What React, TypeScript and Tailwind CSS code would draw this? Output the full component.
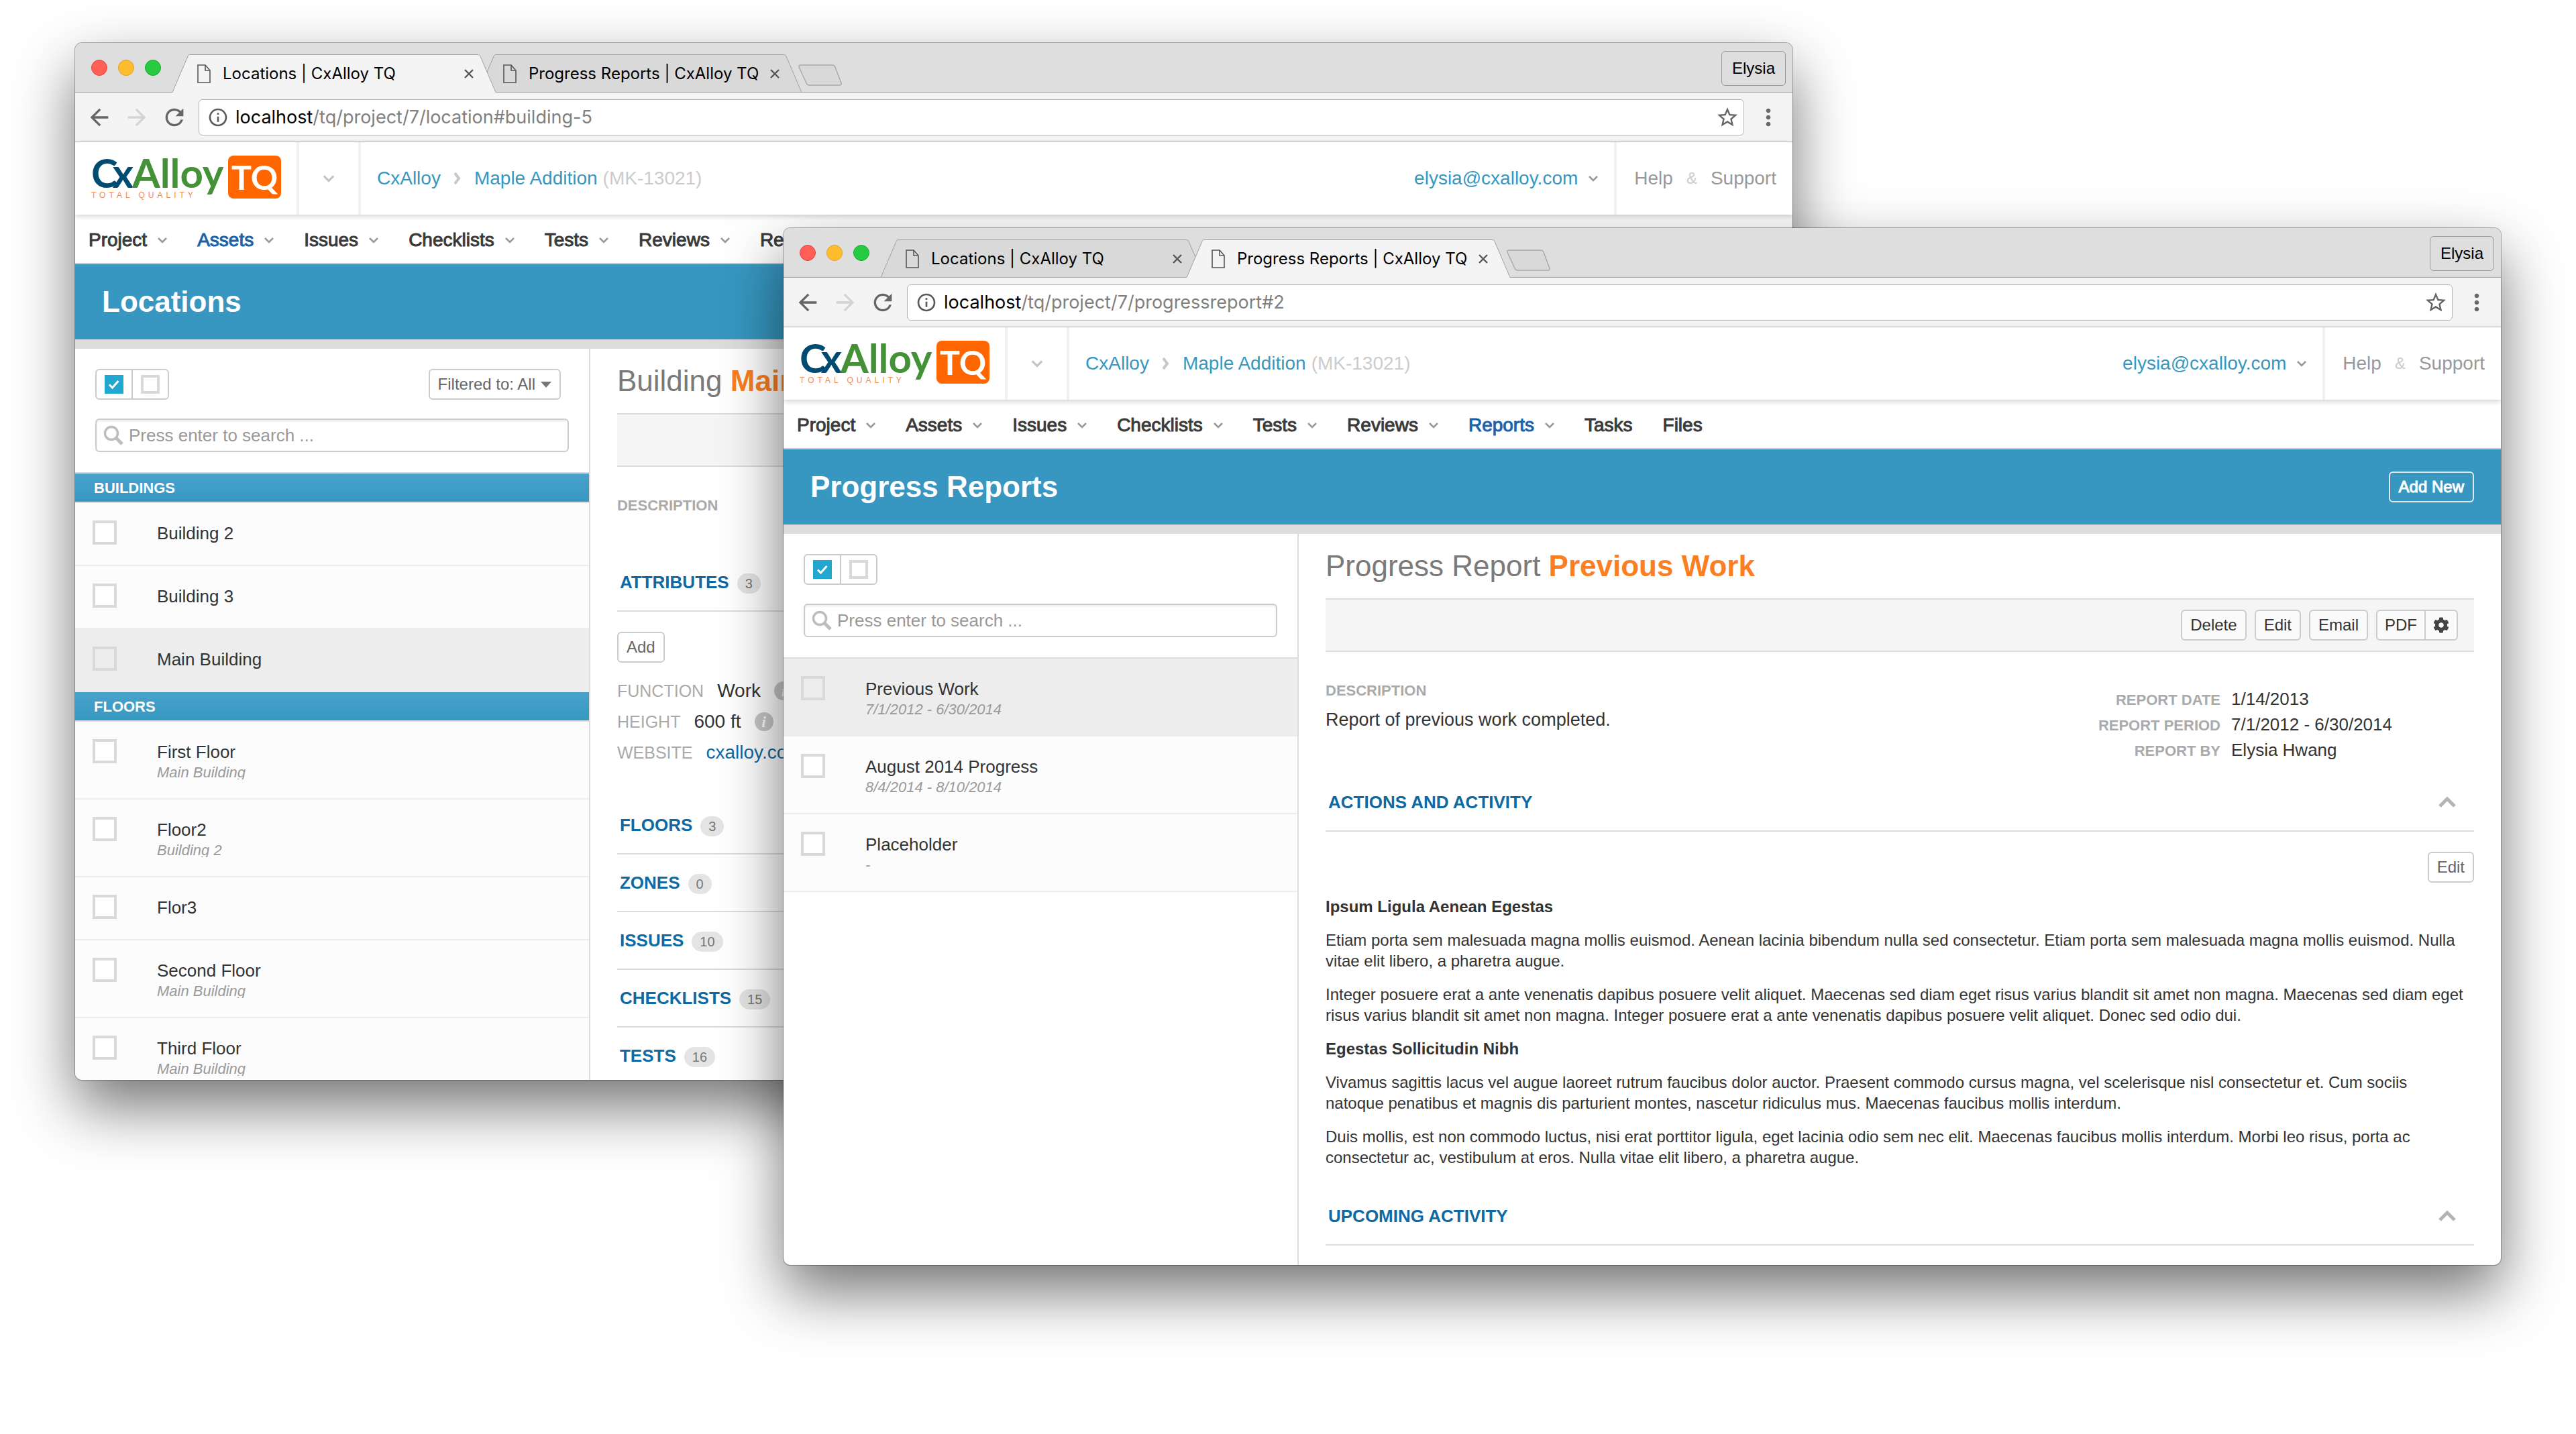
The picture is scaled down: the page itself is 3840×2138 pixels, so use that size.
import { useId, type ReactNode } from "react";
import { FaCog } from "react-icons/fa";
import {
  MdArrowBack,
  MdArrowForward,
  MdInfoOutline,
  MdMoreVert,
  MdRefresh,
  MdStarBorder,
} from "react-icons/md";

function ChevronDown({ className }: { className: string }) {
  return (
    <svg viewBox="0 0 14 10" fill="none" stroke="currentColor" strokeWidth="2.6" className={className} aria-hidden="true">
      <path d="M1 2l6 6 6-6" />
    </svg>
  );
}

function ChevronUp() {
  return (
    <svg viewBox="0 0 26 18" fill="none" stroke="currentColor" strokeWidth="5" className="h-[18px] w-[26px] text-[#b4b4b4]" aria-hidden="true">
      <path d="M2 15L13 4l11 11" />
    </svg>
  );
}

function PageIcon() {
  return (
    <svg viewBox="0 0 20 28" fill="none" stroke="#555" strokeWidth="1.6" className="h-7 w-5 shrink-0" aria-hidden="true">
      <path d="M1 1h11l7 8v18H1z" />
      <path d="M12 1v8h7" />
    </svg>
  );
}

function Tab({ title, active }: { title: string; active: boolean }) {
  return (
    <div className={active ? "relative z-10 -mr-7 h-[57px] w-[484px] shrink-0" : "relative -mr-7 h-[57px] w-[484px] shrink-0"}>
      <svg viewBox="0 0 484 57" className="absolute inset-0 h-full w-full" aria-hidden="true">
        <path
          d="M0 56.5C2 56 2 55 3 52L24 3C25 1 25 .5 28 .5H456C459 .5 459 1 460 3L481 52C482 55 482 56 484 56.5"
          fill={active ? "#f4f4f4" : "#d9d9d9"}
          stroke="#a0a0a0"
        />
        {active ? <path d="M2 56.5H482" stroke="#f4f4f4" strokeWidth="2" /> : <path d="M0 56.5H484" stroke="#a0a0a0" />}
      </svg>
      <div className="relative flex h-full items-center pr-[34px] pl-[38px]">
        <PageIcon />
        <button type="button" className="ml-[18px] flex-1 text-left font-['Inter',sans-serif] text-2xl leading-7 whitespace-nowrap text-black">
          {title}
        </button>
        <button type="button" aria-label={`Close ${title}`} className="text-[#555]">
          <svg viewBox="0 0 14 14" fill="none" stroke="currentColor" strokeWidth="2.4" className="size-[14px]">
            <path d="M1 1l12 12M13 1L1 13" />
          </svg>
        </button>
      </div>
    </div>
  );
}

function Logo() {
  return (
    <a href="#home" className="flex h-16 items-stretch gap-2 font-['Lato',sans-serif] font-bold" aria-label="CxAlloy TQ Total Quality">
      <span className="relative block w-[196px]">
        <span className="flex text-[60px] leading-[50px] whitespace-nowrap text-[#459138]">
          <span className="text-[#004b71]">C</span>
          <span className="-ml-2 text-[#004b71]">x</span>
          <span className="-ml-0.5">Alloy</span>
        </span>
        <span className="absolute bottom-0 left-0 font-['Liberation_Sans',sans-serif] text-[12px] leading-[10px] font-normal tracking-[5px] whitespace-nowrap text-[#f58b4c]">
          TOTAL QUALITY
        </span>
      </span>
      <span className="flex w-[79px] items-center justify-center rounded-lg bg-[#ff6600] text-[50px] leading-none text-white">TQ</span>
    </a>
  );
}

const navItems = ["Project", "Assets", "Issues", "Checklists", "Tests", "Reviews", "Reports", "Tasks", "Files"];
const plainItems = ["Tasks", "Files"];

type WindowProps = {
  className: string;
  activeTab: number;
  path: string;
  activeNav: string;
  title: string;
  action?: ReactNode;
  sidebar: ReactNode;
  children: ReactNode;
};

function BrowserWindow({ className, activeTab, path, activeNav, title, action, sidebar, children }: WindowProps) {
  return (
    <section
      className={`absolute flex w-2/3 flex-col overflow-hidden rounded-[10px] bg-white shadow-[0_0_0_1px_rgba(0,0,0,0.3),0_40px_90px_rgba(0,0,0,0.55)] ${className}`}
    >
      <div className="flex h-[74px] shrink-0 items-end border-b border-[#a0a0a0] bg-[#dedede]">
        <div className="flex gap-4 self-center pl-6">
          <button type="button" aria-label="Close window" className="size-6 rounded-full border border-[#e2463f] bg-[#ff5f57]" />
          <button type="button" aria-label="Minimize window" className="size-6 rounded-full border border-[#e0a028] bg-[#ffbd2e]" />
          <button type="button" aria-label="Zoom window" className="size-6 rounded-full border border-[#1aab29] bg-[#28ca42]" />
        </div>
        <div className="-mb-px ml-4 flex items-end">
          <Tab title="Locations | CxAlloy TQ" active={activeTab === 0} />
          <Tab title="Progress Reports | CxAlloy TQ" active={activeTab === 1} />
        </div>
        <button type="button" aria-label="New tab" className="mb-[9px] ml-[22px]">
          <svg viewBox="0 0 66 32" fill="#d9d9d9" stroke="#a8a8a8" strokeWidth="1.4" className="h-8 w-[66px]">
            <path d="M4 1h46q4 0 5 3l9 24q1 3-3 3H17q-4 0-5-3L1 4q-1-3 3-3z" />
          </svg>
        </button>
        <button type="button" className="mr-2.5 mb-[9px] ml-auto h-[52px] rounded-md border border-[#999] px-[15px] text-2xl leading-none text-black">
          Elysia
        </button>
      </div>

      <div className="flex h-[74px] shrink-0 items-center gap-4 border-b border-[#c0c0c0] bg-[#f4f4f4] px-4 text-[#666]">
        <button type="button" aria-label="Back"><MdArrowBack className="size-10" /></button>
        <button type="button" aria-label="Forward" className="text-[#d4d4d4]"><MdArrowForward className="size-10" /></button>
        <button type="button" aria-label="Reload"><MdRefresh className="size-10" /></button>
        <div className="flex h-[54px] flex-1 items-center rounded-md border border-[#b4b4b4] bg-white pr-1.5 pl-3">
          <MdInfoOutline className="size-8 text-[#5a5a5a]" />
          <span className="ml-2.5 flex-1 font-['Inter',sans-serif] text-[27px] leading-8 text-[#808080]">
            <span className="text-black">localhost</span>
            {path}
          </span>
          <button type="button" aria-label="Bookmark this page"><MdStarBorder className="size-9" /></button>
        </div>
        <button type="button" aria-label="Browser menu"><MdMoreVert className="size-10" /></button>
      </div>

      <header className="relative z-10 flex h-[108px] shrink-0 bg-white text-[28px] leading-8 shadow-[0_2px_8px_rgba(0,0,0,0.2)]">
        <div className="flex w-[334px] items-center border-r-4 border-[#f0f0f0] pb-1 pl-6"><Logo /></div>
        <button type="button" aria-label="Switch project" className="flex w-[92px] items-center justify-center border-r-4 border-[#f0f0f0] text-[#c4c4c4]">
          <ChevronDown className="h-3 w-[18px]" />
        </button>
        <nav aria-label="Breadcrumb" className="flex items-center pl-6 text-[#3797c1]">
          <a href="#account">CxAlloy</a>
          <svg viewBox="0 0 10 18" fill="none" stroke="#c8c8c8" strokeWidth="4" className="mx-5 h-[18px] w-2.5" aria-hidden="true">
            <path d="M1 1l6 8-6 8" />
          </svg>
          <a href="#project">Maple Addition</a>
          <span className="ml-2 text-[#ccc]">(MK-13021)</span>
        </nav>
        <button type="button" className="ml-auto flex items-center gap-4 border-r-4 border-[#f0f0f0] pr-6 text-[#3797c1]">
          elysia@cxalloy.com
          <ChevronDown className="h-2.5 w-3.5 text-[#999]" />
        </button>
        <div className="flex items-center gap-5 pr-6 pl-[26px] text-[#999]">
          <a href="#help">Help</a>
          <span className="text-2xl text-[#ccc]">&amp;</span>
          <a href="#support">Support</a>
        </div>
      </header>

      <nav aria-label="Main" className="flex h-[74px] shrink-0 items-center gap-[45px] border-b-2 border-[#c8c8c8] bg-white pt-1 pl-5 text-[28px] leading-8 text-[#3a3a3a]">
        {navItems.map((item) => (
          <a
            key={item}
            href={`#${item.toLowerCase()}`}
            className={
              item === activeNav
                ? "flex items-center gap-4 text-[#1b62a8] [-webkit-text-stroke:1px]"
                : "flex items-center gap-4 [-webkit-text-stroke:1px]"
            }
          >
            {item}
            {!plainItems.includes(item) && <ChevronDown className="h-2.5 w-3.5 text-[#999]" />}
          </a>
        ))}
      </nav>

      <div className="flex h-[126px] shrink-0 items-center justify-between border-b-[14px] border-[#ddd] bg-[#3797c1] px-10">
        <h1 className="text-[44px] leading-[56px] font-bold text-white">{title}</h1>
        {action}
      </div>

      <div className="flex min-h-0 flex-1">
        <aside className="w-[30%] shrink-0 border-r-2 border-[#ddd]">{sidebar}</aside>
        <main className="min-w-0 flex-1 px-10 text-[#333]">{children}</main>
      </div>
    </section>
  );
}

function SidebarTools({ filter }: { filter?: string }) {
  const id = useId();
  return (
    <div className="border-b-2 border-[#ddd] p-[30px]">
      <div className="flex justify-between">
        <div className="flex h-[46px] rounded-md border-2 border-[#ccc]">
          <button type="button" aria-label="Select all" className="flex w-[54px] items-center justify-center border-r-2 border-[#ccc]">
            <svg viewBox="0 0 28 28" className="size-7">
              <rect width="28" height="28" fill="#22a7d0" />
              <path d="M7 14.5l4.5 4.5 9-10" fill="none" stroke="#fff" strokeWidth="3" />
            </svg>
          </button>
          <button type="button" aria-label="Select none" className="flex w-[52px] items-center justify-center">
            <span className="size-7 border-4 border-[#d8d9da]" />
          </button>
        </div>
        {filter && (
          <button type="button" className="mr-3 flex h-[46px] items-center gap-2 rounded-md border-2 border-[#ccc] px-3 text-2xl leading-none text-[#666]">
            {filter}
            <svg viewBox="0 0 16 9" className="h-[9px] w-4" aria-hidden="true"><path d="M0 0h16l-8 9z" fill="#777" /></svg>
          </button>
        )}
      </div>
      <label
        htmlFor={id}
        className="mt-7 flex h-[50px] items-center gap-2 rounded-md border-2 border-[#ccc] pl-2.5 shadow-[inset_0_2px_3px_rgba(0,0,0,0.08)]"
      >
        <svg viewBox="0 0 30 30" fill="none" stroke="#bdbdbd" className="size-[30px]" aria-hidden="true">
          <circle cx="12" cy="12" r="9.5" strokeWidth="3.5" />
          <path d="M19 19l9 9" strokeWidth="5" />
        </svg>
        <input
          id={id}
          type="text"
          aria-label="Search"
          placeholder="Press enter to search ..."
          className="min-w-0 flex-1 bg-transparent text-[26px] leading-8 outline-none placeholder:text-[#999]"
        />
      </label>
    </div>
  );
}

function GroupHeader({ children }: { children: ReactNode }) {
  return (
    <h2 className="flex h-11 items-center border-b-2 border-[#ddd] bg-linear-to-b from-[#48a2cc] to-[#3698c1] pt-0.5 pl-7 text-[22px] leading-none font-bold text-white">
      {children}
    </h2>
  );
}

function ListRow({ title, note, selected }: { title: string; note?: string; selected?: boolean }) {
  const id = useId();
  return (
    <li className={selected ? "flex border-b-2 border-[#ededed] bg-[#ededed] pl-[26px]" : "flex border-b-2 border-[#ededed] bg-[#fcfcfc] pl-[26px]"}>
      <input
        id={id}
        type="checkbox"
        className={selected ? "mt-[26px] size-9 appearance-none border-4 border-[#d8d9da]" : "mt-[26px] size-9 appearance-none border-4 border-[#d8d9da] bg-white"}
      />
      <label htmlFor={id} className={note ? "ml-[60px] pt-[30px] pb-7" : "ml-[60px] pt-[30px] pb-8"}>
        <span className="block text-[26px] leading-[30px] text-[#333]">{title}</span>
        {note && <span className="mt-1.5 block h-5 overflow-hidden text-[22px] leading-5 text-[#999] italic">{note}</span>}
      </label>
    </li>
  );
}

function DetailHeading({ kind, name }: { kind: string; name: string }) {
  return (
    <h2 className="py-5 text-[44px] leading-[56px] whitespace-nowrap text-[#7a7a7a]">
      {kind} <strong className="text-[#fb7f22]">{name}</strong>
    </h2>
  );
}

function Section({ title, count, open }: { title: string; count?: number; open?: boolean }) {
  return (
    <h3 className="flex h-[86px] items-center border-b-2 border-[#ddd] pl-1 text-[26px] leading-8 font-bold text-[#0f69a2]">
      {title}
      {count !== undefined && (
        <span className="mt-1 ml-3 flex h-[30px] items-center rounded-full bg-[#e4e4e4] px-3 text-xl leading-none font-normal text-[#777]">{count}</span>
      )}
      {open && (
        <button type="button" aria-label={`Collapse ${title.toLowerCase()}`} className="mr-[27px] ml-auto">
          <ChevronUp />
        </button>
      )}
    </h3>
  );
}

function InfoDot() {
  return (
    <span className="flex size-7 items-center justify-center rounded-full bg-[#c8c8c8] font-['Liberation_Serif',serif] text-2xl leading-none font-bold text-white italic">
      i
    </span>
  );
}

const plainButton = "h-[46px] rounded-md border-2 border-[#ccc] bg-white px-3 text-2xl leading-none text-[#666]";
const barButton = "h-[46px] rounded-md border-2 border-[#ccc] bg-[#fafafa] px-3 text-2xl leading-none text-[#333]";

const meta = [
  ["REPORT DATE", "1/14/2013"],
  ["REPORT PERIOD", "7/1/2012 - 6/30/2014"],
  ["REPORT BY", "Elysia Hwang"],
];

export default function App() {
  return (
    <div className="relative h-screen min-h-[1200px] overflow-hidden bg-white font-['Liberation_Sans',Arial,sans-serif]">
      <BrowserWindow
        className="top-16 bottom-[528px] left-28"
        activeTab={0}
        path="/tq/project/7/location#building-5"
        activeNav="Assets"
        title="Locations"
        sidebar={
          <>
            <SidebarTools filter="Filtered to: All" />
            <GroupHeader>BUILDINGS</GroupHeader>
            <ul>
              <ListRow title="Building 2" />
              <ListRow title="Building 3" />
              <ListRow title="Main Building" selected />
            </ul>
            <GroupHeader>FLOORS</GroupHeader>
            <ul>
              <ListRow title="First Floor" note="Main Building" />
              <ListRow title="Floor2" note="Building 2" />
              <ListRow title="Flor3" />
              <ListRow title="Second Floor" note="Main Building" />
              <ListRow title="Third Floor" note="Main Building" />
            </ul>
          </>
        }
      >
        <DetailHeading kind="Building" name="Main Building" />
        <div className="h-20 border-y-2 border-[#ddd] bg-[#f5f5f5]" />
        <h3 className="mt-11 mb-[58px] text-[22px] leading-7 font-bold text-[#aaa]">DESCRIPTION</h3>
        <Section title="ATTRIBUTES" count={3} />
        <button type="button" className={`mt-[30px] block ${plainButton}`}>Add</button>
        <dl className="mt-[19px] mb-[43px] text-[28px] leading-[46px]">
          <div className="flex items-center gap-5">
            <dt className="text-[25px] text-[#aaa]">FUNCTION</dt>
            <dd className="flex items-center gap-5">Work <InfoDot /></dd>
          </div>
          <div className="flex items-center gap-5">
            <dt className="text-[25px] text-[#aaa]">HEIGHT</dt>
            <dd className="flex items-center gap-5">600 ft <InfoDot /></dd>
          </div>
          <div className="flex items-center gap-5">
            <dt className="text-[25px] text-[#aaa]">WEBSITE</dt>
            <dd><a href="#website" className="text-[#0f69a2]">cxalloy.com</a></dd>
          </div>
        </dl>
        <Section title="FLOORS" count={3} />
        <Section title="ZONES" count={0} />
        <Section title="ISSUES" count={10} />
        <Section title="CHECKLISTS" count={15} />
        <Section title="TESTS" count={16} />
      </BrowserWindow>

      <BrowserWindow
        className="top-[340px] right-28 bottom-[252px]"
        activeTab={1}
        path="/tq/project/7/progressreport#2"
        activeNav="Reports"
        title="Progress Reports"
        action={
          <button type="button" className="h-[46px] rounded-md border-2 border-[#dfe9ef] px-[13px] text-2xl leading-none text-white [-webkit-text-stroke:1px]">
            Add New
          </button>
        }
        sidebar={
          <>
            <SidebarTools />
            <ul>
              <ListRow title="Previous Work" note="7/1/2012 - 6/30/2014" selected />
              <ListRow title="August 2014 Progress" note="8/4/2014 - 8/10/2014" />
              <ListRow title="Placeholder" note="-" />
            </ul>
          </>
        }
      >
        <DetailHeading kind="Progress Report" name="Previous Work" />
        <div className="flex h-20 items-center justify-end gap-3 border-y-2 border-[#ddd] bg-[#f5f5f5] pr-6">
          <button type="button" className={barButton}>Delete</button>
          <button type="button" className={barButton}>Edit</button>
          <button type="button" className={barButton}>Email</button>
          <div className="flex h-[46px] rounded-md border-2 border-[#ccc] bg-[#fafafa] text-2xl leading-none text-[#333]">
            <button type="button" className="border-r-2 border-[#ccc] px-[11px]">PDF</button>
            <button type="button" aria-label="PDF settings" className="px-[11px]"><FaCog className="size-6 text-[#444]" /></button>
          </div>
        </div>
        <div className="mt-11 flex h-[138px] items-start justify-between">
          <div>
            <h3 className="text-[22px] leading-7 font-bold text-[#aaa]">DESCRIPTION</h3>
            <p className="mt-3 text-[27px] leading-[34px]">Report of previous work completed.</p>
          </div>
          <table className="mt-[7px] mr-[122px]">
            <tbody>
              {meta.map(([label, value]) => (
                <tr key={label} className="h-[38px]">
                  <th scope="row" className="pt-1 pr-4 text-right align-middle text-[22px] leading-7 font-bold text-[#aaa]">{label}</th>
                  <td className="align-middle text-[26px] leading-[34px]">{value}</td>
                </tr>
              ))}
            </tbody>
          </table>
        </div>
        <Section title="ACTIONS AND ACTIVITY" open />
        <div className="flex justify-end pt-[30px]">
          <button type="button" className={plainButton}>Edit</button>
        </div>
        <div className="mt-5 space-y-[19px] pr-2 text-2xl leading-[31px]">
          <h4 className="font-bold">Ipsum Ligula Aenean Egestas</h4>
          <p>
            Etiam porta sem malesuada magna mollis euismod. Aenean lacinia bibendum nulla sed consectetur. Etiam porta sem malesuada magna mollis euismod. Nulla
            vitae elit libero, a pharetra augue.
          </p>
          <p>
            Integer posuere erat a ante venenatis dapibus posuere velit aliquet. Maecenas sed diam eget risus varius blandit sit amet non magna. Maecenas sed diam eget
            risus varius blandit sit amet non magna. Integer posuere erat a ante venenatis dapibus posuere velit aliquet. Donec sed odio dui.
          </p>
          <h4 className="font-bold">Egestas Sollicitudin Nibh</h4>
          <p>
            Vivamus sagittis lacus vel augue laoreet rutrum faucibus dolor auctor. Praesent commodo cursus magna, vel scelerisque nisl consectetur et. Cum sociis
            natoque penatibus et magnis dis parturient montes, nascetur ridiculus mus. Maecenas faucibus mollis interdum.
          </p>
          <p>
            Duis mollis, est non commodo luctus, nisi erat porttitor ligula, eget lacinia odio sem nec elit. Maecenas faucibus mollis interdum. Morbi leo risus, porta ac
            consectetur ac, vestibulum at eros. Nulla vitae elit libero, a pharetra augue.
          </p>
        </div>
        <div className="mt-[30px]">
          <Section title="UPCOMING ACTIVITY" open />
        </div>
      </BrowserWindow>
    </div>
  );
}
